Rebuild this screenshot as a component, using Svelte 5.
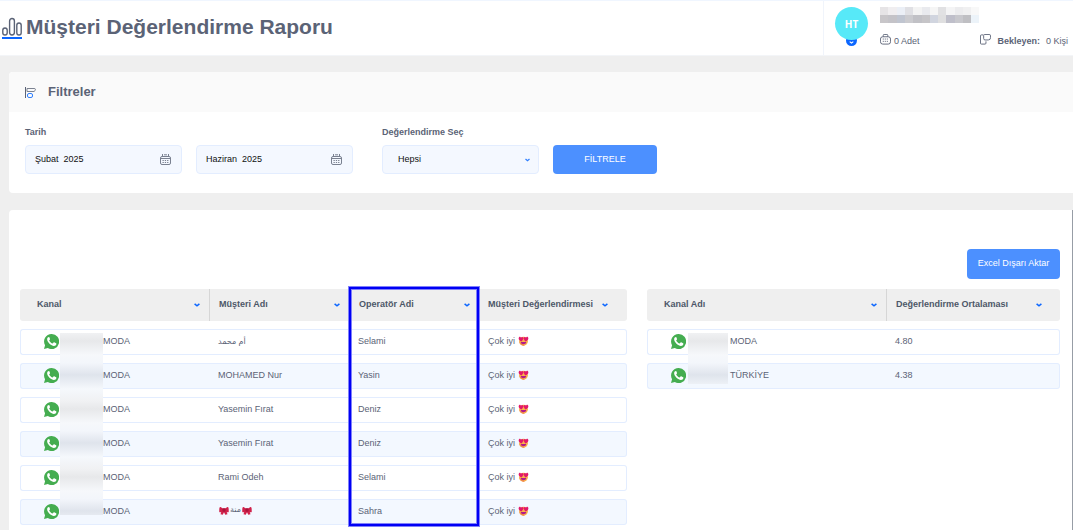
<script lang="ts">
	interface Row {
		customer: string;
		operator: string;
		bows?: boolean;
	}

	const rows: Row[] = [
		{ customer: 'أم محمد', operator: 'Selami' },
		{ customer: 'MOHAMED Nur', operator: 'Yasin' },
		{ customer: 'Yasemin Fırat', operator: 'Deniz' },
		{ customer: 'Yasemin Fırat', operator: 'Deniz' },
		{ customer: 'Rami Odeh', operator: 'Selami' },
		{ customer: 'منة', operator: 'Sahra', bows: true }
	];

	const averages = [
		{ channel: 'MODA', score: '4.80' },
		{ channel: 'TÜRKİYE', score: '4.38' }
	];

	// hidden account name, one colour per block
	const nameBlocks = [
		['#e6e4e6', '#f0eef0', '#ebeff6', '#e0e0e4', '#f3f3f3', '#e9eaee', '#f5f5f5', '#e1e1e3', '#f4f4f5', '#ececee', '#f0f0f1', '#f8f8f8'],
		['#c8c6c9', '#c4c3c8', '#c0c5d0', '#cbcbcf', '#c1c1c6', '#c6c5c8', '#d1d5df', '#dfdfe0', '#bfbfca', '#c8c8cd', '#bfbfc3', '#ecf3f9']
	];

	let from = $state('Şubat  2025');
	let to = $state('Haziran  2025');
	let rating = $state('Hepsi');
</script>

{#snippet chevron()}
	<svg class="chevron" viewBox="0 0 6 4" aria-hidden="true">
		<path d="M.6.8 3 2.8 5.4.8" fill="none" stroke="currentColor" stroke-width="1.5" />
	</svg>
{/snippet}

{#snippet calendar()}
	<svg class="calendar" viewBox="0 0 11 11" fill="none" stroke="currentColor" aria-hidden="true">
		<rect x=".5" y="2.500" width="10" height="8" rx="1.5" />
		<path d="M2.500 0v2.500M8.500 0v2.500M4 .8h3M1 4.500h9" />
		<path d="M2.500 6.500h6M2.500 8.500h6" stroke-dasharray="1.3 1" />
	</svg>
{/snippet}

{#snippet whatsapp()}
	<svg class="whatsapp" viewBox="0 0 24 24" aria-hidden="true">
		<path fill="#45ad50" d="M12 0a12 12 0 0 0-10.300 18L0 24l6.200-1.600A12 12 0 1 0 12 0z" />
		<path fill="#fff" d="M8.700 5.500c-.3-.7-.6-.7-1-.7-.9 0-2.700 1.300-2.700 3.700 0 2.300 1.700 4.500 1.900 4.800 2.300 3.500 5.400 5.400 8.700 5.900 2 .2 3.800-1.200 4.100-2.700.3-1.300.1-1.600-.4-1.900l-2.900-1.400c-.5-.2-.8-.2-1.100.3l-1.100 1.400c-.3.300-.5.300-1 .1-2.100-1-3.600-2.300-4.800-4.300-.2-.4-.1-.6.200-.9l.9-1.200c.2-.3.100-.6 0-.9z" />
	</svg>
{/snippet}

{#snippet loveEyes()}
	<svg class="emoji" viewBox="0 0 20 20" role="img" aria-label="Kalp gözlü gülen yüz">
		<circle cx="10" cy="10.500" r="8.800" fill="#f9b04a" />
		<path fill="#f08a4a" d="M1.500 12a8.800 8.800 0 0 0 11 7L7 15z" />
		<path fill="#b01a8c" d="M4.500 12h11c-.6 6-10.400 6-11 0z" />
		<path fill="#e2186a" d="M5.500 11C1 9-1 5.500 1 2.700c1.500-1.700 3.400-1 4 .6.900-1.800 3.400-2 4.400-.3 1.300 2.600-1.200 6-3.900 8zM14.500 11c4.500-2 6.500-5.500 4.500-8.300-1.500-1.700-3.400-1-4 .6-.9-1.800-3.400-2-4.400-.3-1.300 2.600 1.200 6 3.900 8z" />
	</svg>
{/snippet}

{#snippet bow()}
	<svg class="bow" viewBox="0 0 20 18" role="img" aria-label="Fiyonk">
		<path fill="#d0214a" d="M8 5 3 2C1 1.500.500 3 .5 11.500 1 13 3 12.500 4.500 12L3 16.500l4.500 1L10 12.500l2.500 5 4.500-1-1.500-4.500c1.500.5 3.500 1 4-.5C19.500 3 19 1.500 17 2l-5 3z" />
		<rect x="7" y="4.500" width="6" height="7" rx="2" fill="#a9143b" />
	</svg>
{/snippet}

<div class="page">
	<header class="topbar">
		<svg class="chart" viewBox="0 0 20 22" fill="none" aria-hidden="true">
			<g stroke="#5b6376" stroke-width="1.400">
				<rect x=".8" y="11" width="4.400" height="7" rx="2.200" />
				<rect x="7.600" y="1.500" width="4.800" height="16.500" rx="2.400" />
				<rect x="14.800" y="6" width="4.400" height="12" rx="2.200" />
			</g>
			<path d="M0 21h20" stroke="#0b66ff" stroke-width="2" />
		</svg>
		<h1>Müşteri Değerlendirme Raporu</h1>

		<div class="account">
			<div class="avatar-wrap">
				<button class="avatar" type="button">HT</button>
				<span class="avatar-toggle">{@render chevron()}</span>
			</div>
			<div class="account-info">
				<svg class="account-name" viewBox="0 0 99 16" aria-hidden="true" shape-rendering="crispEdges">
					{#each nameBlocks as line, y}
						{#each line as fill, x}
							<rect x={x * 8.3} y={y * 8} width="9" height="8" {fill} />
						{/each}
					{/each}
				</svg>
				<div class="stats">
					<span class="stat">
						<svg class="stat-icon" viewBox="0 0 12 12" fill="none" stroke="currentColor" aria-hidden="true">
							<rect x=".5" y="3" width="11" height="8" rx="2.500" />
							<path d="M3.500 3V1.500q0-1 1-1h3q1 0 1 1V3" />
							<path d="M3 5.500h6M3 8h6" stroke-dasharray="1.200 1" />
						</svg>
						0 Adet
					</span>
					<span class="stat waiting">
						<svg class="stat-icon" viewBox="0 0 12 12" fill="none" stroke="currentColor" aria-hidden="true">
							<path d="M3.500 1H1.500q-1 0-1 1v8q0 1 1 1h4q1 0 1-1V8" />
							<path d="M5 .5h5q1.500 0 1.500 1.500v2q0 2.500-2.500 2.500H5.500Q4 6.500 4 5V1.500q0-1 1-1" />
						</svg>
						<b>Bekleyen:</b>
						<span>0 Kişi</span>
					</span>
				</div>
			</div>
		</div>
	</header>

	<main>
		<section class="card">
			<div class="card-header">
				<svg class="filter" viewBox="0 0 11 11" fill="none" aria-hidden="true">
					<path d="M.5 0v11" stroke="#5b6376" />
					<path d="M2 1.500h7q1.500 0 1.500 1T9 4.500H2z" stroke="#7b8291" />
					<rect x="2.500" y="6.500" width="5" height="4" rx="1.500" stroke="#2f7fff" />
				</svg>
				<h2>Filtreler</h2>
			</div>
			<form class="filters" onsubmit={(e) => e.preventDefault()}>
				<div class="group">
					<label for="from">Tarih</label>
					<div class="dates">
						<div class="field">
							<input id="from" type="text" bind:value={from} />
							{@render calendar()}
						</div>
						<div class="field">
							<input type="text" aria-label="Bitiş tarihi" bind:value={to} />
							{@render calendar()}
						</div>
					</div>
				</div>
				<div class="group">
					<label for="rating">Değerlendirme Seç</label>
					<div class="field">
						<select id="rating" bind:value={rating}>
							<option>Hepsi</option>
						</select>
						{@render chevron()}
					</div>
				</div>
				<button class="primary" type="submit">FİLTRELE</button>
			</form>
		</section>

		<section class="card report">
			<button class="primary export" type="button">Excel Dışarı Aktar</button>
			<div class="tables">
				<div class="table-wrap">
					<table>
						<colgroup>
							<col class="col-channel" />
							<col class="col-customer" />
							<col class="col-operator" />
							<col />
						</colgroup>
						<thead>
							<tr>
								<th><div class="head">Kanal {@render chevron()}</div></th>
								<th class="divided"><div class="head">Müşteri Adı {@render chevron()}</div></th>
								<th><div class="head">Operatör Adi {@render chevron()}</div></th>
								<th><div class="head short">Müşteri Değerlendirmesi {@render chevron()}</div></th>
							</tr>
						</thead>
						<tbody>
							{#each rows as row}
								<tr>
									<td><div class="channel">{@render whatsapp()}MODA</div></td>
									<td>
										{#if row.bows}
											<span class="with-bows">{@render bow()}<bdi>{row.customer}</bdi>{@render bow()}</span>
										{:else}
											<bdi>{row.customer}</bdi>
										{/if}
									</td>
									<td>{row.operator}</td>
									<td>Çok iyi {@render loveEyes()}</td>
								</tr>
							{/each}
						</tbody>
					</table>
					<div class="mask"></div>
					<div class="highlight"></div>
				</div>

				<div class="table-wrap">
					<table>
						<colgroup>
							<col />
							<col class="col-average" />
						</colgroup>
						<thead>
							<tr>
								<th><div class="head">Kanal Adı {@render chevron()}</div></th>
								<th class="divided"><div class="head average">Değerlendirme Ortalaması {@render chevron()}</div></th>
							</tr>
						</thead>
						<tbody>
							{#each averages as item}
								<tr>
									<td><div class="channel">{@render whatsapp()}{item.channel}</div></td>
									<td>{item.score}</td>
								</tr>
							{/each}
						</tbody>
					</table>
					<div class="mask small"></div>
				</div>
			</div>
		</section>
	</main>
</div>

<style>
	:global(body) {
		background: #efefef;
	}

	.page {
		display: flex;
		flex-direction: column;
		height: 100vh;
		overflow: hidden;
		box-sizing: border-box;
		font: 9px/12px 'Liberation Sans', Arial, sans-serif;
		color: #5b6376;
	}

	.page * {
		box-sizing: border-box;
	}

	button,
	input,
	select {
		font: inherit;
	}

	svg {
		flex: none;
	}

	.topbar {
		display: flex;
		align-items: center;
		height: 56px;
		flex: none;
		padding-left: 2px;
		background: white;
		border-top: 1px solid #f0f6ff;
		border-bottom: 1px solid #f3f5f8;
	}

	.chart {
		width: 20px;
		height: 22px;
		margin-right: 4px;
	}

	h1 {
		margin: 0;
		padding-bottom: 2px;
		font-size: 21px;
		line-height: 24px;
	}

	.account {
		display: flex;
		align-self: stretch;
		gap: 12px;
		width: 250px;
		margin-left: auto;
		padding: 6px 5px 0 11px;
		border-left: 1px solid #f0f4fb;
	}

	.avatar-wrap {
		position: relative;
		isolation: isolate;
		width: 33px;
		height: 33px;
	}

	.avatar {
		width: 100%;
		height: 100%;
		padding: 0;
		border: 0;
		border-radius: 50%;
		background: #57e9f8;
		color: white;
		font: bold 10px 'Open Sans', sans-serif;
	}

	.avatar-toggle {
		position: absolute;
		z-index: -1;
		left: 11px;
		bottom: -6px;
		display: flex;
		align-items: flex-end;
		justify-content: center;
		width: 11px;
		height: 11px;
		padding-bottom: 2px;
		border-radius: 50%;
		background: #0b66ff;
	}

	.avatar-toggle .chevron {
		width: 5px;
		height: 3px;
		color: white;
	}

	.account-info {
		flex: 1;
	}

	.account-name {
		display: block;
		width: 99px;
		height: 16px;
	}

	.stats {
		display: flex;
		justify-content: space-between;
		margin-top: 11px;
		white-space: nowrap;
	}

	.stat {
		display: flex;
		align-items: center;
		gap: 3px;
	}

	.waiting {
		gap: 6px;
	}

	.stat-icon {
		width: 11px;
		height: 11px;
		margin-bottom: 3px;
	}

	main {
		display: flex;
		flex-direction: column;
		flex: 1;
		gap: 17px;
		min-height: 0;
		padding: 16px 0 0 9px;
	}

	.card {
		flex: none;
		background: white;
		border-radius: 4px 0 0 4px;
	}

	.card-header {
		display: flex;
		align-items: center;
		gap: 12px;
		height: 40px;
		padding-left: 16px;
		background: #fafafa;
		border-radius: 4px 0 0 0;
	}

	.filter {
		width: 11px;
		height: 11px;
	}

	h2 {
		margin: 0;
		font-size: 13px;
		line-height: 16px;
	}

	.filters {
		display: flex;
		align-items: flex-end;
		padding: 14px 16px 19px;
	}

	.group {
		margin-right: 14px;
	}

	.group:first-child {
		margin-right: 29px;
	}

	.group label {
		display: block;
		margin-bottom: 7px;
		font-weight: bold;
	}

	.dates {
		display: flex;
		gap: 14px;
	}

	.field {
		display: flex;
		align-items: center;
		width: 157px;
		height: 29px;
		padding-right: 10px;
		background: #f4f8ff;
		border: 1px solid #e3edff;
		border-radius: 4px;
	}

	.field input,
	.field select {
		flex: 1;
		min-width: 0;
		height: 100%;
		padding: 0 9px 2px;
		border: 0;
		outline: 0;
		background: none;
		color: #111;
		appearance: none;
		white-space: pre;
	}

	.field select {
		padding-left: 15px;
	}

	.field .chevron {
		width: 5px;
		margin-right: -2px;
		color: #2f7fff;
	}

	.calendar {
		width: 11px;
		height: 11px;
		color: #7a8190;
	}

	.primary {
		width: 104px;
		height: 29px;
		padding: 0 0 2px;
		border: 0;
		border-radius: 4px;
		background: #4c90ff;
		color: white;
	}

	.chevron {
		width: 6px;
		height: 4px;
		color: #0b66ff;
	}

	.report {
		flex: 1;
		padding: 39px 12px 0 11px;
		border-right: 1px solid #979da6;
	}

	.export {
		display: block;
		width: 93px;
		height: 30px;
		margin-left: auto;
	}

	.tables {
		display: grid;
		grid-template-columns: 607fr 413fr;
		gap: 20px;
		align-items: start;
		margin-top: 2px;
	}

	.table-wrap {
		position: relative;
	}

	table {
		width: 100%;
		table-layout: fixed;
		border-collapse: separate;
		border-spacing: 0 8px;
	}

	.col-channel {
		width: 189px;
	}

	.col-customer {
		width: 140px;
	}

	.col-operator {
		width: 130px;
	}

	.col-average {
		width: 174px;
	}

	th {
		height: 32px;
		padding: 0 9px 0 10px;
		background: #efefef;
		color: #4d5768;
		text-align: left;
		white-space: nowrap;
	}

	th:first-child {
		padding-left: 17px;
		border-radius: 3px 0 0 3px;
	}

	th:last-child {
		padding-left: 9px;
		border-radius: 0 3px 3px 0;
	}

	th.divided {
		padding-left: 9px;
		border-left: 1px solid #d6d6d6;
	}

	.head {
		display: flex;
		align-items: center;
		justify-content: space-between;
		height: 14px;
		margin-bottom: 2px;
	}

	.head .chevron {
		margin-top: 2px;
	}

	.head.short {
		justify-content: flex-start;
		gap: 9px;
	}

	.head.average {
		padding-right: 9px;
	}

	td {
		height: 26px;
		padding: 0 9px 2px;
		border: solid #e3edff;
		border-width: 1px 0;
		line-height: 12px;
		white-space: nowrap;
	}

	td:first-child {
		padding-left: 23px;
		border-left-width: 1px;
		border-radius: 3px 0 0 3px;
	}

	td:last-child {
		border-right-width: 1px;
		border-radius: 0 3px 3px 0;
	}

	tr:nth-child(even) td {
		background: #f3f8ff;
	}

	.channel {
		display: flex;
		align-items: center;
		gap: 44px;
	}

	.whatsapp {
		width: 15px;
		height: 15px;
	}

	bdi {
		font-family: 'Liberation Sans', 'DejaVu Sans', sans-serif;
	}

	bdi:dir(rtl) {
		font-size: 8px;
	}

	.emoji {
		width: 11px;
		height: 10px;
		vertical-align: -2px;
	}

	.with-bows {
		display: inline-flex;
		align-items: center;
		gap: 1px;
		padding-left: 1px;
	}

	.bow {
		width: 10px;
		height: 9px;
	}

	.mask {
		position: absolute;
		top: 52px;
		left: 40px;
		width: 43px;
		height: 182px;
		background: repeating-linear-gradient(#f0f1f3 0, #e7e8ea 8px, #f6f8fb 22px, #f3f6fb 30px, #dfe4ec 42px, #f5f8fc 56px, #f0f1f3 68px);
	}

	.mask.small {
		left: 41px;
		width: 40px;
		height: 51px;
	}

	.highlight {
		position: absolute;
		top: 5px;
		left: 328px;
		width: 132px;
		height: 241px;
		border: 3px solid #0000f5;
		outline: 1px solid #8080fa;
		outline-offset: -1px;
		box-shadow: inset 0 0 0 1px #8080fa;
	}
</style>
